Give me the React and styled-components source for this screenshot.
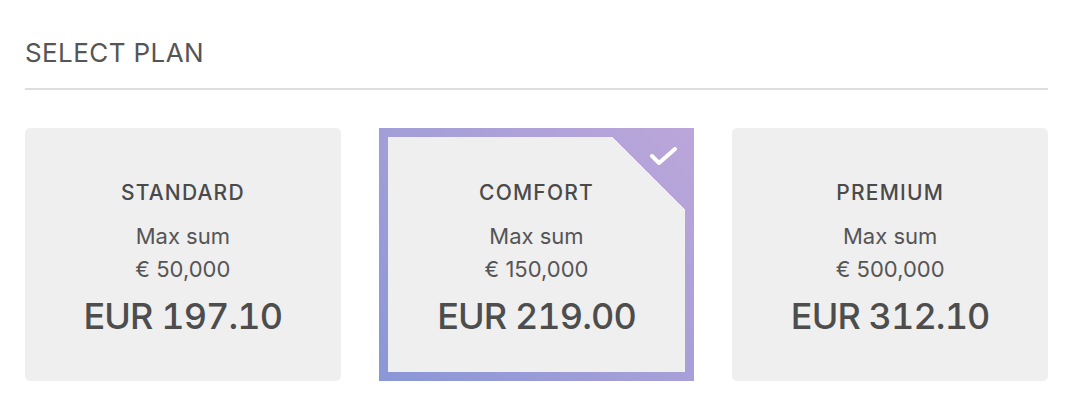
import React, { useState } from 'react';
import styled, { createGlobalStyle, css } from 'styled-components';

const GlobalStyle = createGlobalStyle`
  body {
    margin: 0;
    background: #fff;
    font-family: Inter, 'Liberation Sans', Arial, sans-serif;
  }
`;

const Page = styled.div`
  padding: 38px 32px 0 25px;
`;

const Heading = styled.h2`
  margin: 0;
  font-size: 26px;
  line-height: 30px;
  font-weight: 400;
  letter-spacing: 0.4px;
  color: #555;
`;

const Divider = styled.hr`
  margin: 20px 0 38px;
  border: 0;
  height: 2px;
  background: #dedede;
`;

const Plans = styled.div`
  display: grid;
  grid-template-columns: repeat(3, 1fr);
  gap: 38px;
`;

const Card = styled.div`
  position: relative;
  box-sizing: border-box;
  height: 253px;
  padding-top: 52px;
  border-radius: 5px;
  background: #efefef;
  text-align: center;
  cursor: pointer;

  ${(props) => props.selected && css`
    padding-top: 43px;
    border-radius: 0;
    border: 9px solid transparent;
    background:
      linear-gradient(225deg, transparent 51px, #efefef 51px) padding-box,
      linear-gradient(45deg, #8a97d6 0%, #a59fd8 50%, #bca6da 100%) border-box;
  `}
`;

const Check = styled.svg`
  position: absolute;
  top: 10px;
  right: 8px;
  width: 27px;
  height: 19px;
`;

const Name = styled.div`
  font-size: 21px;
  line-height: 26px;
  font-weight: 500;
  letter-spacing: 1.2px;
  color: #4a4a4a;
`;

const Sum = styled.div`
  margin-top: 14px;
  font-size: 22px;
  line-height: 33px;
  color: #555;
`;

const Price = styled.div`
  margin-top: 8px;
  font-size: 36px;
  line-height: 44px;
  font-weight: 500;
  letter-spacing: -0.9px;
  font-variant-numeric: tabular-nums;
  color: #4d4d4d;
`;

const plans = [
  { id: 'standard', name: 'STANDARD', max: '€ 50,000', price: 'EUR 197.10' },
  { id: 'comfort', name: 'COMFORT', max: '€ 150,000', price: 'EUR 219.00' },
  { id: 'premium', name: 'PREMIUM', max: '€ 500,000', price: 'EUR 312.10' },
];

const App = () => {
  const [selected, setSelected] = useState('comfort');

  return (
    <Page>
      <GlobalStyle />
      <Heading>SELECT PLAN</Heading>
      <Divider />
      <Plans>
        {plans.map((plan) => {
          const isSelected = plan.id === selected;
          return (
            <Card
              key={plan.id}
              selected={isSelected}
              onClick={() => setSelected(plan.id)}
            >
              {isSelected && (
                <Check viewBox="0 0 27 19">
                  <path
                    d="M2 9 L9 16 L25 2"
                    fill="none"
                    stroke="#fff"
                    strokeWidth="4"
                    strokeLinecap="round"
                    strokeLinejoin="round"
                  />
                </Check>
              )}
              <Name>{plan.name}</Name>
              <Sum>
                Max sum
                <br />
                {plan.max}
              </Sum>
              <Price>{plan.price}</Price>
            </Card>
          );
        })}
      </Plans>
    </Page>
  );
};

export default App;
